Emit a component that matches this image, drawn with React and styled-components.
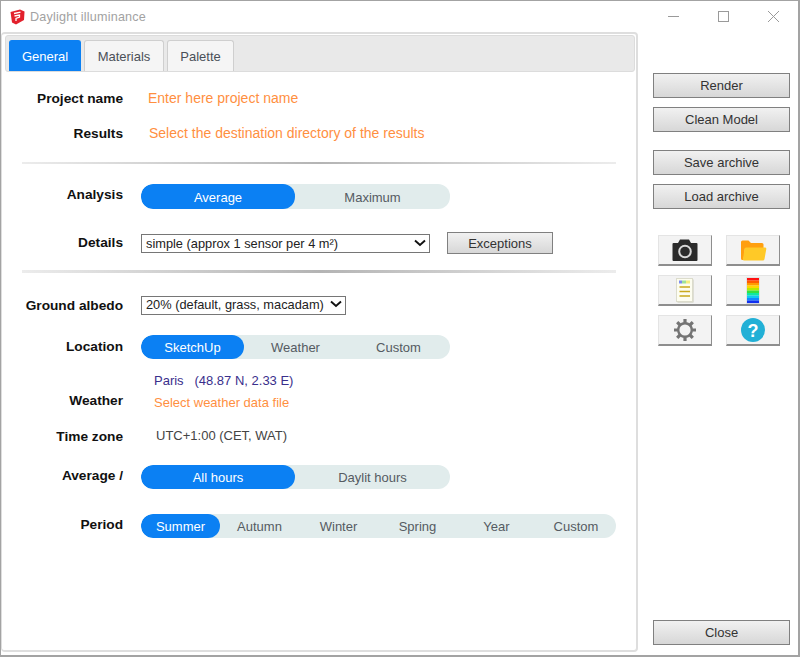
import React from 'react';
import styled, { createGlobalStyle } from 'styled-components';

const GlobalStyle = createGlobalStyle`
  html, body { margin: 0; padding: 0; background: #fff; }
  * { box-sizing: border-box; }
  body { font-family: "Liberation Sans", Arial, sans-serif; }
`;

const Window = styled.div`
  width: 800px;
  height: 657px;
  display: flex;
  flex-direction: column;
  background: #fff;
  border: 1px solid #a3a3a3;
  border-width: 1px 2px 2px 1px;
  overflow: hidden;
`;

const TitleBar = styled.div`
  height: 31px;
  flex: none;
  display: flex;
  align-items: center;
  padding-left: 9px;
`;

const Title = styled.span`
  margin-left: 5px;
  font-size: 12.6px;
  color: #a2a2a2;
  letter-spacing: 0.2px;
  flex: 1;
`;

const WinControls = styled.div`
  display: flex;
  align-items: center;
`;

const WinButton = styled.div`
  width: 50px;
  height: 30px;
  display: flex;
  align-items: center;
  justify-content: center;
`;

const Main = styled.div`
  flex: 1;
  display: flex;
  min-height: 0;
`;

const Panel = styled.div`
  width: 637px;
  margin-bottom: 3px;
  padding: 1px 3px 0 3px;
  border: 2px solid #dedede;
  border-left-width: 1px;
  border-radius: 4px;
  flex: none;
`;

const TabBar = styled.div`
  height: 37px;
  display: flex;
  align-items: flex-end;
  gap: 3px;
  padding-left: 3px;
  background: #e9e9e9;
  border: 1px solid #dcdcdc;
  border-radius: 3px;
  width: 630px;
`;

const Tab = styled.div`
  width: ${p => p.$w}px;
  height: 31px;
  display: flex;
  align-items: center;
  justify-content: center;
  font-size: 13px;
  border-radius: 3px 3px 0 0;
  color: ${p => (p.$active ? '#fff' : '#4a5058')};
  background: ${p => (p.$active ? '#0b80f3' : '#f5f5f5')};
  border: 1px solid ${p => (p.$active ? '#0b80f3' : '#cfcfcf')};
  border-bottom: none;
`;

const Form = styled.div`
  padding: 14px 0 0 17px;
  display: flex;
  flex-direction: column;
`;

const Row = styled.div`
  display: flex;
  align-items: center;
  height: ${p => p.$h}px;
  margin-top: ${p => p.$top || 0}px;
`;

const Label = styled.div`
  width: 101px;
  flex: none;
  text-align: right;
  margin-right: 18px;
  font-size: 13.7px;
  font-weight: 700;
  color: #111;
  white-space: nowrap;
  position: relative;
  top: ${p => p.$shift || 0}px;
`;

const Link = styled.div`
  font-size: ${p => p.$size || 14}px;
  color: #ff8f3f;
  padding-left: ${p => p.$pad || 0}px;
`;

const Divider = styled.div`
  width: 594px;
  height: ${p => p.$h}px;
  margin-top: ${p => p.$top}px;
  background: linear-gradient(to right, #ececec, #b4b4b4 50%, #ececec);
`;

const Segmented = styled.div`
  display: flex;
  width: ${p => p.$w}px;
  height: ${p => p.$h || 24}px;
  background: #e1ecec;
  border-radius: 12px;
  overflow: hidden;
`;

const Segment = styled.div`
  width: ${p => p.$w}px;
  display: flex;
  align-items: center;
  justify-content: center;
  font-size: 13px;
  padding-top: 1px;
  border-radius: ${p => (p.$active ? '12px' : '0')};
  color: ${p => (p.$active ? '#fff' : '#555b62')};
  background: ${p => (p.$active ? '#0b80f3' : 'transparent')};
`;

const Select = styled.div`
  width: ${p => p.$w}px;
  height: 19px;
  display: flex;
  align-items: center;
  justify-content: space-between;
  padding: 0 3px ${p => p.$lift || 0}px 4px;
  font-size: 12.8px;
  color: #222;
  background: #fff;
  border: 1px solid #767676;
  white-space: nowrap;
`;

const Button = styled.div`
  width: ${p => p.$w || 137}px;
  height: ${p => p.$h || 25}px;
  margin-top: ${p => p.$top || 0}px;
  margin-left: ${p => p.$left || 0}px;
  display: flex;
  align-items: center;
  justify-content: center;
  font-size: 13px;
  color: #333;
  background: linear-gradient(to bottom, #f1f1f1, #d7d7d7);
  border: 1px solid #808080;
  flex: none;
`;

const InfoBlock = styled.div`
  display: flex;
  flex-direction: column;
  gap: 7px;
  padding-left: 13px;
`;

const Place = styled.div`
  font-size: 13px;
  color: #3a2f8c;
  white-space: pre;
`;

const Plain = styled.div`
  font-size: 13px;
  color: #444;
  padding: 0 0 2px 15px;
`;

const Side = styled.div`
  flex: 1;
  padding: 41px 0 0 15px;
  display: flex;
  flex-direction: column;
`;

const IconGrid = styled.div`
  display: grid;
  grid-template-columns: 54px 54px;
  grid-auto-rows: 31px;
  column-gap: 14px;
  row-gap: 9px;
  margin: 26px 0 0 5px;
`;

const IconButton = styled.div`
  display: flex;
  align-items: center;
  justify-content: center;
  background: #f3f3f3;
  border: 1px solid #e4e4e4;
  border-right: 1px solid #8e8e8e;
  border-bottom: 2px solid #8e8e8e;
`;

const Spacer = styled.div`
  flex: 1;
`;

const CloseWrap = styled.div`
  margin-bottom: 10px;
`;

const SketchUpLogo = () => (
  <svg width="15" height="16" viewBox="0 0 15 16">
    <path d="M0.5 3 L10 0.5 L14.5 2.5 L14 11 L6 15.5 L2 13.5 Z" fill="#e2202c" />
    <path d="M4 4.5 L10.5 3.2 M4.5 7 L9.5 6 L9.5 8 L6 9.5 L6 12" fill="none" stroke="#fff" strokeWidth="1.3" />
  </svg>
);

const Chevron = () => (
  <svg width="12" height="8" viewBox="0 0 12 8">
    <path d="M1 1.5 L6 6 L11 1.5" fill="none" stroke="#111" strokeWidth="1.9" />
  </svg>
);

const CameraIcon = () => (
  <svg width="26" height="23" viewBox="0 0 26 23">
    <path d="M1.5 4 H6 L8 0.5 H17 L19 4 H24.5 Q25.5 4 25.5 5 V21 Q25.5 22 24.5 22 H1.5 Q0.5 22 0.5 21 V5 Q0.5 4 1.5 4 Z" fill="#2b2b2b" />
    <circle cx="13" cy="12.5" r="5.8" fill="none" stroke="#d8d8d8" strokeWidth="2" />
  </svg>
);

const FolderIcon = () => (
  <svg width="27" height="21" viewBox="0 0 27 21">
    <path d="M1 2 Q1 0.5 2.5 0.5 H8.5 L11 3 H22 Q23.5 3 23.5 4.5 V8 H5 L3.5 20 H2.5 Q1 20 1 18.5 Z" fill="#ff9f0f" />
    <path d="M6 7.5 H25 Q26.5 7.5 26.3 9 L24.5 19 Q24.3 20.5 22.8 20.5 H4 Q2.8 20.5 3 19 L4.5 9 Q4.7 7.5 6 7.5 Z" fill="#ffc927" />
  </svg>
);

const ReportIcon = () => (
  <svg width="18" height="25" viewBox="0 0 18 25">
    <rect x="1.5" y="1.5" width="16" height="23" fill="#c9cab8" />
    <rect x="0.5" y="0.5" width="16" height="23" fill="#fdfdf0" stroke="#dcdccc" />
    <rect x="3" y="2.5" width="3" height="3" fill="#7d8bf0" />
    <rect x="6" y="2.5" width="4" height="3" fill="#9fe29a" />
    <rect x="10" y="2.5" width="4" height="3" fill="#f2ee80" />
    <path d="M3.5 9 H14 M3.5 13.5 H14 M3.5 18 H14" stroke="#c9a91c" strokeWidth="1.3" />
  </svg>
);

const bandColors = ['#ff1010', '#ff5a00', '#ff9a00', '#ffd500', '#b8e800', '#35e040', '#10e8a0', '#10c8f0', '#1088ff', '#1030f0'];

const PaletteIcon = () => (
  <svg width="14" height="27" viewBox="0 0 14 27">
    <rect x="0.5" y="0.5" width="13" height="26" fill="#fff" stroke="#e4e4e4" />
    {bandColors.map((c, i) => (
      <rect key={c} x="1" y={1 + i * 2.5} width="12" height="2.6" fill={c} />
    ))}
  </svg>
);

const GearIcon = () => (
  <svg width="24" height="24" viewBox="0 0 24 24">
    <g stroke="#747474" strokeWidth="3.2" strokeLinecap="butt">
      <path d="M12 1 V5 M12 19 V23 M1 12 H5 M19 12 H23 M4.2 4.2 L7 7 M17 17 L19.8 19.8 M4.2 19.8 L7 17 M17 7 L19.8 4.2" />
    </g>
    <circle cx="12" cy="12" r="6.8" fill="none" stroke="#747474" strokeWidth="2.4" />
  </svg>
);

const HelpIcon = () => (
  <svg width="24" height="24" viewBox="0 0 24 24">
    <circle cx="12" cy="12" r="12" fill="#22b0d6" />
    <text x="12" y="18.5" textAnchor="middle" fontSize="18" fontWeight="700" fontFamily="Liberation Sans" fill="#fff">?</text>
  </svg>
);

const App = () => (
  <>
    <GlobalStyle />
    <Window>
      <TitleBar>
        <SketchUpLogo />
        <Title>Daylight illuminance</Title>
        <WinControls>
          <WinButton>
            <svg width="11" height="11" viewBox="0 0 11 11"><path d="M0 5.5 H11" stroke="#9a9a9a" /></svg>
          </WinButton>
          <WinButton>
            <svg width="11" height="11" viewBox="0 0 11 11"><rect x="0.5" y="0.5" width="10" height="10" fill="none" stroke="#9a9a9a" /></svg>
          </WinButton>
          <WinButton>
            <svg width="11" height="11" viewBox="0 0 11 11"><path d="M0 0 L11 11 M11 0 L0 11" stroke="#9a9a9a" /></svg>
          </WinButton>
        </WinControls>
      </TitleBar>
      <Main>
        <Panel>
          <TabBar>
            <Tab $active $w={72}>General</Tab>
            <Tab $w={80}>Materials</Tab>
            <Tab $w={67}>Palette</Tab>
          </TabBar>
          <Form>
            <Row $h={24}>
              <Label>Project name</Label>
              <Link $pad={7}>Enter here project name</Link>
            </Row>
            <Row $h={24} $top={11}>
              <Label>Results</Label>
              <Link $pad={8}>Select the destination directory of the results</Link>
            </Row>
            <Divider $h={2} $top={17} />
            <Row $h={25} $top={20}>
              <Label $shift={-2}>Analysis</Label>
              <Segmented $w={309} $h={25}>
                <Segment $active $w={154}>Average</Segment>
                <Segment $w={155}>Maximum</Segment>
              </Segmented>
            </Row>
            <Row $h={22} $top={23}>
              <Label $shift={-1}>Details</Label>
              <Select $w={289}>
                simple (approx 1 sensor per 4 m²)
                <Chevron />
              </Select>
              <Button $w={106} $h={22} $left={17}>Exceptions</Button>
            </Row>
            <Divider $h={3} $top={16} />
            <Row $h={20} $top={22}>
              <Label>Ground albedo</Label>
              <Select $w={205} $lift={2}>
                20% (default, grass, macadam)
                <Chevron />
              </Select>
            </Row>
            <Row $h={24} $top={20}>
              <Label $shift={-1}>Location</Label>
              <Segmented $w={309}>
                <Segment $active $w={103}>SketchUp</Segment>
                <Segment $w={103}>Weather</Segment>
                <Segment $w={103}>Custom</Segment>
              </Segmented>
            </Row>
            <Row $h={42} $top={11}>
              <Label $shift={9}>Weather</Label>
              <InfoBlock>
                <Place>{'Paris   (48.87 N, 2.33 E)'}</Place>
                <Link $size={13}>Select weather data file</Link>
              </InfoBlock>
            </Row>
            <Row $h={22} $top={13}>
              <Label>Time zone</Label>
              <Plain>UTC+1:00 (CET, WAT)</Plain>
            </Row>
            <Row $h={24} $top={18}>
              <Label $shift={-2}>Average /</Label>
              <Segmented $w={309}>
                <Segment $active $w={154}>All hours</Segment>
                <Segment $w={155}>Daylit hours</Segment>
              </Segmented>
            </Row>
            <Row $h={24} $top={25}>
              <Label $shift={-2}>Period</Label>
              <Segmented $w={475}>
                <Segment $active $w={79}>Summer</Segment>
                <Segment $w={79}>Autumn</Segment>
                <Segment $w={79}>Winter</Segment>
                <Segment $w={79}>Spring</Segment>
                <Segment $w={79}>Year</Segment>
                <Segment $w={80}>Custom</Segment>
              </Segmented>
            </Row>
          </Form>
        </Panel>
        <Side>
          <Button>Render</Button>
          <Button $top={9}>Clean Model</Button>
          <Button $top={18}>Save archive</Button>
          <Button $top={9}>Load archive</Button>
          <IconGrid>
            <IconButton><CameraIcon /></IconButton>
            <IconButton><FolderIcon /></IconButton>
            <IconButton><ReportIcon /></IconButton>
            <IconButton><PaletteIcon /></IconButton>
            <IconButton><GearIcon /></IconButton>
            <IconButton><HelpIcon /></IconButton>
          </IconGrid>
          <Spacer />
          <CloseWrap><Button>Close</Button></CloseWrap>
        </Side>
      </Main>
    </Window>
  </>
);

export default App;
